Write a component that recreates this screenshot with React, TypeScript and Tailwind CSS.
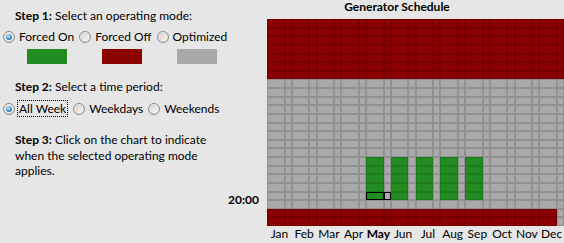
import React from "react";

const months = ["Jan", "Feb", "Mar", "Apr", "May", "Jun", "Jul", "Aug", "Sep", "Oct", "Nov", "Dec"];

function cellColor(row: number, col: number): "red" | "green" | "grey" {
  const month = Math.floor(col / 2);
  const weekend = col % 2 === 1;
  if (row < 7) return "red";
  if (row >= 22) return col === 23 ? "grey" : "red";
  if (row >= 16 && row <= 20 && !weekend && month >= 4 && month <= 8) return "green";
  return "grey";
}

function Radio({ checked, label, focus }: { checked?: boolean; label: string; focus?: boolean }) {
  return (
    <div className="flex items-center">
      <span className="w-[12px] h-[12px] rounded-full border border-[#8a8c8e] bg-[radial-gradient(circle_at_50%_40%,#ffffff,#d4d4d4)] flex items-center justify-center shrink-0">
        {checked ? (
          <span className="w-[6px] h-[6px] rounded-full bg-[radial-gradient(circle_at_40%_35%,#c6ecff,#3b8fd6_55%,#18518a)]" />
        ) : (
          <span className="w-[8px] h-[8px] rounded-full bg-[linear-gradient(135deg,#d2d2d2,#f6f6f6)]" />
        )}
      </span>
      {focus ? (
        <span className="ml-[2px] px-[1px] border border-dotted border-black leading-[15px]">{label}</span>
      ) : (
        <span className="ml-[4px]">{label}</span>
      )}
    </div>
  );
}

export default function App() {
  const cells: React.ReactNode[] = [];
  for (let r = 0; r < 24; r++) {
    for (let c = 0; c < 24; c++) {
      const color = cellColor(r, c);
      const hover = r === 20 && (c === 8 || c === 9);
      let cls = "";
      if (hover) {
        cls = color === "green" ? "bg-[#228b22] border border-black" : "bg-[#a9a9a9] border border-black";
      } else if (color === "red") {
        cls = "bg-[#8b0000] border border-black/[0.15]";
      } else if (color === "green") {
        cls = "bg-[#228b22] border border-black/[0.12]";
      } else {
        cls = "bg-[#a9a9a9] border border-black/[0.14]";
      }
      cells.push(<div key={r * 24 + c} className={cls} />);
    }
  }

  return (
    <div className="w-[564px] h-[243px] bg-[#e6e6e6] flex text-[12px] leading-[16px] text-black overflow-hidden font-['Lato',sans-serif]">
      <div className="w-[230px] flex flex-col pt-[8px]">
        <div className="pl-[15px]">
          <span className="font-bold">Step 1:</span> Select an operating mode:
        </div>
        <div className="mt-[5px] pl-[3px] flex gap-[5px]">
          <Radio checked label="Forced On" />
          <Radio label="Forced Off" />
          <Radio label="Optimized" />
        </div>
        <div className="mt-[4px] pl-[27px] flex gap-[35px]">
          <div className="w-[40px] h-[15px] bg-[#228b22]" />
          <div className="w-[40px] h-[15px] bg-[#8b0000]" />
          <div className="w-[40px] h-[15px] bg-[#a9a9a9]" />
        </div>
        <div className="mt-[15px] pl-[15px]">
          <span className="font-bold">Step 2:</span> Select a time period:
        </div>
        <div className="mt-[5px] pl-[3px] flex gap-[5px]">
          <Radio checked focus label="All Week" />
          <Radio label="Weekdays" />
          <Radio label="Weekends" />
        </div>
        <div className="mt-[15px] pl-[15px] leading-[15.7px]">
          <span className="font-bold">Step 3:</span> Click on the chart to indicate
          <br />
          when the selected operating mode
          <br />
          applies.
        </div>
      </div>
      <div className="w-[334px] flex flex-col">
        <div className="h-[19px] text-center font-bold leading-[14px]">Generator Schedule</div>
        <div className="flex">
          <div className="w-[37px] h-[207px] relative">
            <div className="absolute right-[8px] top-[172.5px] font-bold">20:00</div>
          </div>
          <div className="flex flex-col">
            <div className="w-[297px] h-[207px] grid grid-cols-[repeat(12,5fr_2fr)] grid-rows-[repeat(24,1fr)]">
              {cells}
            </div>
            <div className="w-[297px] flex">
              {months.map((m) => (
                <div key={m} className={m === "May" ? "flex-1 text-center font-bold" : "flex-1 text-center"}>
                  {m}
                </div>
              ))}
            </div>
          </div>
        </div>
      </div>
    </div>
  );
}
